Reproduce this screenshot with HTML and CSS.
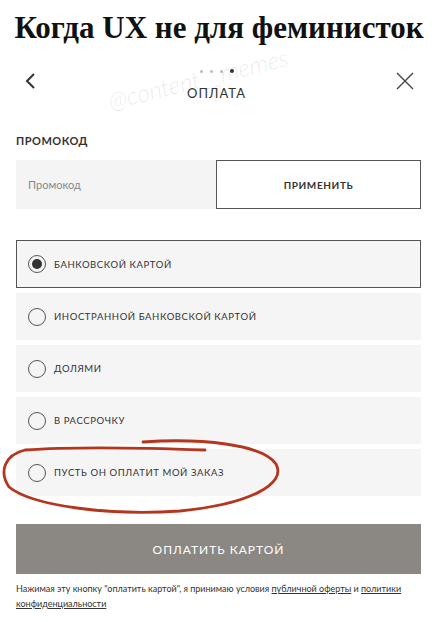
FILE: index.html
```html
<!DOCTYPE html>
<html lang="ru">
<head>
    <meta charset="UTF-8">
    <meta name="viewport" content="width=device-width, initial-scale=1.0">
    <title>Когда UX не для феминисток</title>
    <link rel="stylesheet" href="styles.css">
</head>
<body>
    <h1 class="meme-title">Когда UX не для феминисток</h1>

    <div class="screen">
        <!-- Header -->
        <div class="topbar">
            <svg class="icon" width="14" height="18" viewBox="0 0 14 18">
                <path d="M10 2 L3 9 L10 16" fill="none" stroke="#333" stroke-width="2"/>
            </svg>
            <div class="topbar-center">
                <div class="steps">
                    <span></span><span></span><span></span><span class="active"></span>
                </div>
                <div class="topbar-title">ОПЛАТА</div>
            </div>
            <svg class="icon" width="20" height="20" viewBox="0 0 20 20">
                <path d="M2 2 L18 18 M18 2 L2 18" fill="none" stroke="#444" stroke-width="1.4"/>
            </svg>
        </div>

        <!-- Promo code -->
        <div class="section-label">ПРОМОКОД</div>
        <div class="promo">
            <div class="promo-input">Промокод</div>
            <div class="promo-btn">ПРИМЕНИТЬ</div>
        </div>

        <!-- Payment options -->
        <div class="options">
            <div class="option selected"><span class="radio"></span>БАНКОВСКОЙ КАРТОЙ</div>
            <div class="option"><span class="radio"></span>ИНОСТРАННОЙ БАНКОВСКОЙ КАРТОЙ</div>
            <div class="option"><span class="radio"></span>ДОЛЯМИ</div>
            <div class="option"><span class="radio"></span>В РАССРОЧКУ</div>
            <div class="option"><span class="radio"></span>ПУСТЬ ОН ОПЛАТИТ МОЙ ЗАКАЗ</div>
        </div>

        <div class="pay-btn">ОПЛАТИТЬ КАРТОЙ</div>
        <div class="terms">
            <div>Нажимая эту кнопку "оплатить картой", я принимаю условия <span class="link">публичной оферты</span> и <span class="link">политики</span></div>
            <div><span class="link">конфиденциальности</span></div>
        </div>

        <!-- overlays: watermark and the hand-drawn circle -->
        <div class="watermark">@content__memes</div>
        <svg class="scribble" width="300" height="90" viewBox="0 430 300 90">
            <path d="M143,442 C200,438 262,444 276,464 C287,484 250,504 180,511 C110,516 32,506 9,487 C-1,472 4,455 25,450 C80,446 150,448 205,450"
                  fill="none" stroke="#b5361f" stroke-width="2.8" stroke-linecap="round"/>
        </svg>
    </div>
</body>
</html>
```

FILE: styles.css
```css
body {
    margin: 0;
    background: #fff;
    color: #333;
    font-family: Lato, "Open Sans", sans-serif;
}
.meme-title {
    margin: 0;
    padding-top: 10px;
    font-family: "Liberation Serif", serif;
    font-weight: bold;
    font-size: 31px;
    line-height: 36px;
    text-align: center;
    color: #111;
}
.screen {
    position: relative;
    padding: 0 17px 0 16px;
}
.topbar {
    display: flex;
    justify-content: space-between;
    align-items: center;
    height: 70px;
    padding: 0 6px 0 8px;
}
.topbar-center {
    display: flex;
    flex-direction: column;
    align-items: center;
    gap: 12px;
    margin-top: 8px;
}
.steps {
    display: flex;
    gap: 7px;
    align-items: center;
}
.steps span {
    width: 3px;
    height: 3px;
    border-radius: 50%;
    background: #bbb;
}
.steps span.active {
    width: 4px;
    height: 4px;
    background: #333;
}
.topbar-title {
    font-size: 13px;
    letter-spacing: 1px;
    color: #333;
}
.section-label {
    margin-top: 18px;
    font-size: 11px;
    font-weight: bold;
    letter-spacing: 0.5px;
    color: #333;
}
.promo {
    display: flex;
    margin-top: 13px;
    height: 49px;
}
.promo-input {
    flex: 0 0 200px;
    background: #f4f4f4;
    display: flex;
    align-items: center;
    padding-left: 12px;
    box-sizing: border-box;
    font-size: 11px;
    color: #888;
}
.promo-btn {
    flex: 1;
    border: 1px solid #555;
    display: flex;
    align-items: center;
    justify-content: center;
    font-size: 10px;
    font-weight: bold;
    letter-spacing: 0.6px;
    color: #333;
}
.options {
    display: flex;
    flex-direction: column;
    gap: 5px;
    margin-top: 31px;
}
.option {
    display: flex;
    align-items: center;
    gap: 8px;
    height: 47px;
    padding-left: 12px;
    background: #f5f5f5;
    font-size: 9.5px;
    letter-spacing: 0.6px;
    color: #333;
}
.option.selected {
    border: 1px solid #555;
    padding-left: 11px;
    height: 48px;
    box-sizing: border-box;
}
.radio {
    width: 18px;
    height: 18px;
    border: 1.3px solid #555;
    border-radius: 50%;
    box-sizing: border-box;
    position: relative;
}
.option.selected .radio::after {
    content: "";
    position: absolute;
    inset: 3px;
    border-radius: 50%;
    background: #333;
}
.pay-btn {
    margin-top: 28px;
    height: 50px;
    background: #8b8782;
    color: #fff;
    display: flex;
    align-items: center;
    justify-content: center;
    font-size: 12px;
    letter-spacing: 1px;
}
.terms {
    margin-top: 7px;
    font-size: 9px;
    line-height: 15px;
    color: #333;
}
.link {
    text-decoration: underline;
}
.watermark {
    position: absolute;
    left: 106px;
    top: 18px;
    font-size: 24px;
    font-style: italic;
    font-weight: 300;
    color: rgba(0, 0, 0, 0.1);
    transform: rotate(-14deg);
    pointer-events: none;
}
.scribble {
    position: absolute;
    left: 0;
    top: 384px;
    overflow: visible;
    pointer-events: none;
}
```
